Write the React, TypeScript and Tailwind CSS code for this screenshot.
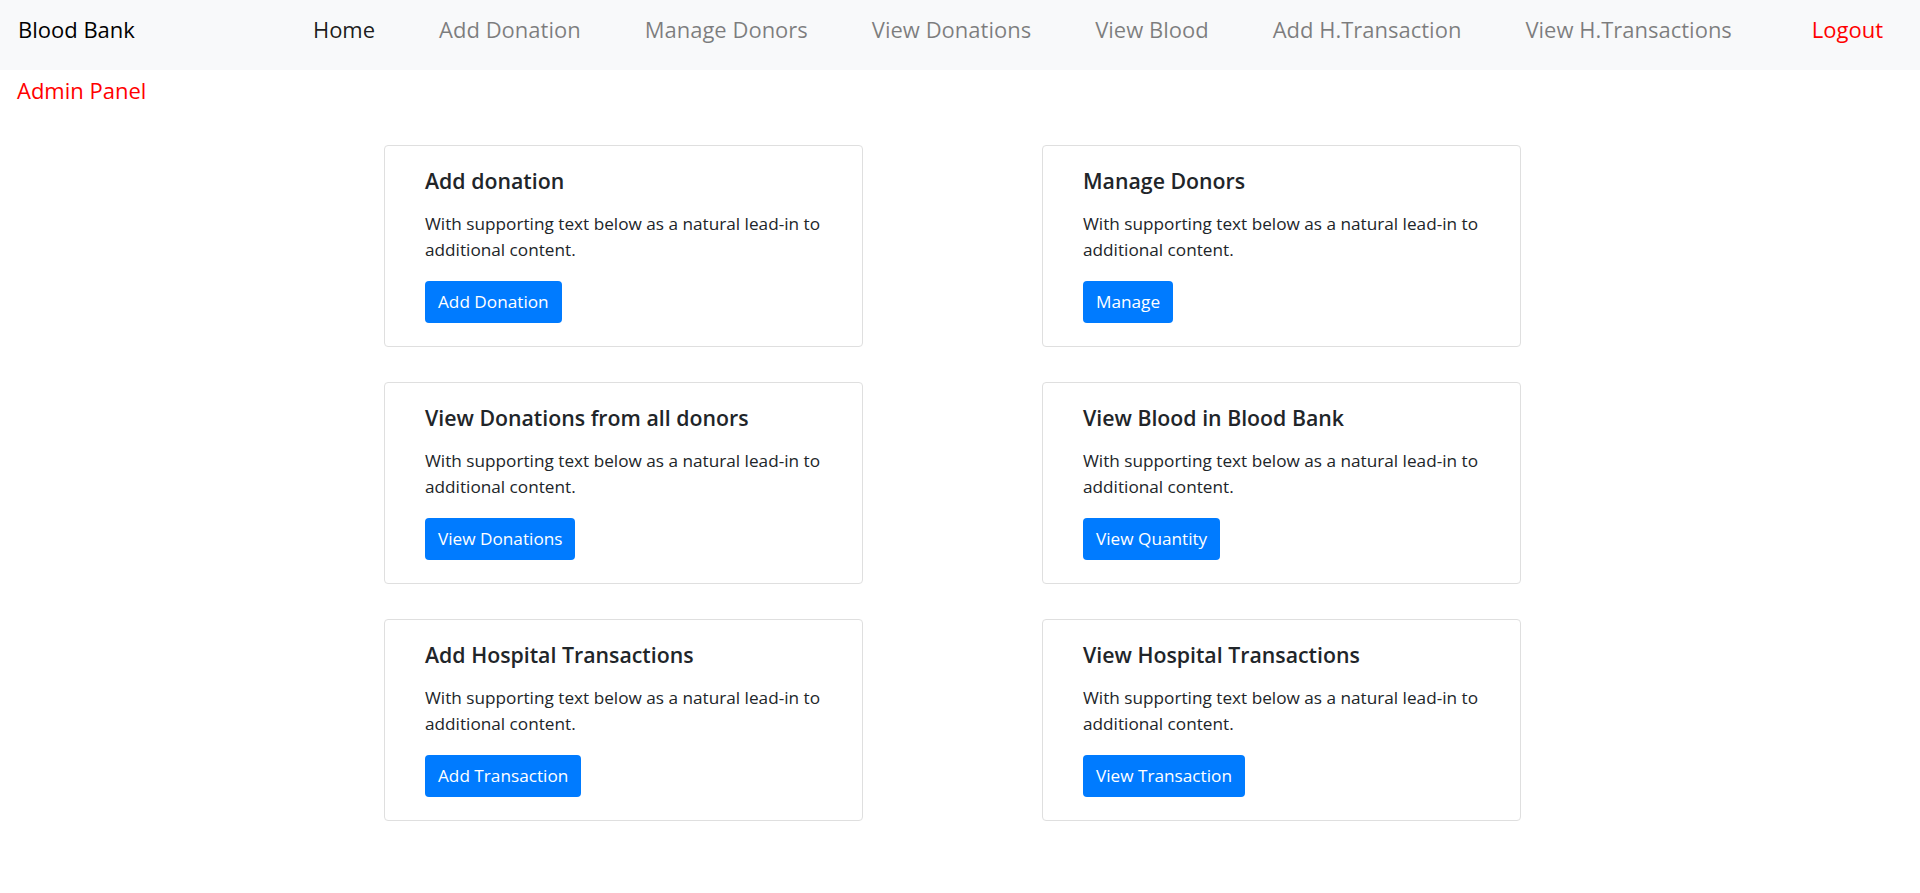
const navLinks = ['Add Donation', 'Manage Donors', 'View Donations', 'View Blood', 'Add H.Transaction', 'View H.Transactions'];

const cards = [
  { title: 'Add donation', button: 'Add Donation' },
  { title: 'Manage Donors', button: 'Manage' },
  { title: 'View Donations from all donors', button: 'View Donations' },
  { title: 'View Blood in Blood Bank', button: 'View Quantity' },
  { title: 'Add Hospital Transactions', button: 'Add Transaction' },
  { title: 'View Hospital Transactions', button: 'View Transaction' },
];

function Card({ title, button }: { title: string; button: string }) {
  return (
    <div className="h-[202px] rounded-[4px] border border-[#dfdfdf] bg-white pl-[40px] pr-[20px] pt-[22px]">
      <h5 className="text-[21.3px] font-semibold leading-[26px] text-[#212529]">{title}</h5>
      <p className="mt-[17px] text-[17.2px] leading-[26.4px] text-[#212529]">
        With supporting text below as a natural lead-in to additional content.
      </p>
      <button className="mt-[17px] h-[42px] rounded-[4px] bg-[#007bff] px-[13px] text-[17.2px] text-white">
        {button}
      </button>
    </div>
  );
}

export default function App() {
  return (
    <div className="min-h-screen bg-white font-['Open_Sans',sans-serif]">
      <nav className="flex h-[70px] items-center bg-[#f8f9fa] pb-[12px] pl-[18px] pr-[37px] text-[22px]">
        <span className="text-black">Blood Bank</span>
        <ul className="ml-[178px] flex gap-[64px]">
          <li className="text-black/90">Home</li>
          {navLinks.map((l) => (
            <li key={l} className="text-black/50">{l}</li>
          ))}
        </ul>
        <span className="ml-auto text-[#ff0000]">Logout</span>
      </nav>
      <div className="mt-[4px] pl-[17px] text-[22px] leading-[33px] text-[#ff0000]">Admin Panel</div>
      <div className="mt-[38px] grid grid-cols-[479px_479px] gap-x-[179px] gap-y-[35px] pl-[384px]">
        {cards.map((c) => (
          <Card key={c.title} {...c} />
        ))}
      </div>
    </div>
  );
}
